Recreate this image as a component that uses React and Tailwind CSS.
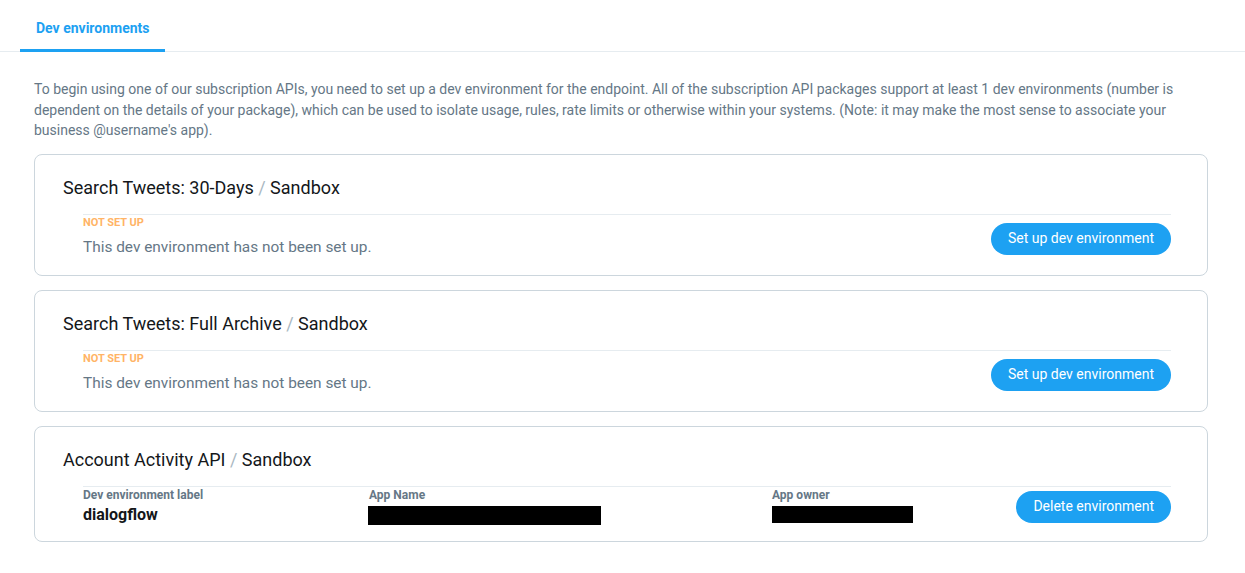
const redacted = 'bg-black';

function Title({ name }) {
  return (
    <h2 className="text-[18px] leading-[24px] text-[#14171a]">
      {name} <span className="text-[#aab8c2]">/</span> Sandbox
    </h2>
  );
}

function PillButton({ children, className = '' }) {
  return (
    <button className={`h-8 rounded-full bg-[#1da1f2] px-[17px] text-[14px] text-white ${className}`}>
      {children}
    </button>
  );
}

function NotSetUpCard({ name }) {
  return (
    <div className="rounded-lg border border-[#ccd6dd] pt-[21px] pb-[18px] pl-[28px] pr-[36px]">
      <Title name={name} />
      <div className="ml-[20px] mt-[14px] flex items-end justify-between border-t border-[#e6ecf0] pt-[1px]">
        <div>
          <p className="text-[11px] font-bold leading-[14px] text-[#ffb466]">NOT SET UP</p>
          <p className="mt-[7px] text-[15.4px] leading-[20px] text-[#657786]">
            This dev environment has not been set up.
          </p>
        </div>
        <PillButton className="mb-[2px]">Set up dev environment</PillButton>
      </div>
    </div>
  );
}

function ActivityCard() {
  return (
    <div className="rounded-lg border border-[#ccd6dd] pt-[21px] pb-[16px] pl-[28px] pr-[36px]">
      <Title name="Account Activity API" />
      <div className="ml-[20px] mt-[14px] flex items-start border-t border-[#e6ecf0] pt-[1px]">
        <div className="w-[286px]">
          <p className="text-[12px] font-bold leading-[14px] text-[#657786]">Dev environment label</p>
          <p className="mt-[3px] text-[16px] font-bold leading-[20px] text-[#14171a]">dialogflow</p>
        </div>
        <div className="w-[403px]">
          <p className="text-[12px] font-bold leading-[14px] text-[#657786]">App Name</p>
          <div className={`ml-[-1px] mt-[4px] h-[19px] w-[233px] ${redacted}`} />
        </div>
        <div className="flex-1">
          <p className="text-[12px] font-bold leading-[14px] text-[#657786]">App owner</p>
          <div className={`mt-[4px] h-[17px] w-[141px] ${redacted}`} />
        </div>
        <PillButton className="mt-[3px]">Delete environment</PillButton>
      </div>
    </div>
  );
}

export default function App() {
  return (
    <div className="min-h-[573px] bg-white font-['Roboto',sans-serif]">
      <div className="border-b border-[#e6ecf0] pl-5">
        <div className="inline-block border-b-[3px] border-[#1da1f2] px-4 pt-[19px] pb-[12px] mb-[-1px] text-[14px] font-bold leading-[18px] text-[#1da1f2]">
          Dev environments
        </div>
      </div>

      <div className="ml-[34px] mr-[37px] pt-[27px]">
        <p className="text-[14px] leading-[20.5px] text-[#657786]">
          To begin using one of our subscription APIs, you need to set up a dev environment for the endpoint. All of
          the subscription API packages support at least 1 dev environments (number is dependent on the details of
          your package), which can be used to isolate usage, rules, rate limits or otherwise within your systems.
          (Note: it may make the most sense to associate your business @username's app).
        </p>

        <div className="mt-[13px] flex flex-col gap-[14px]">
          <NotSetUpCard name="Search Tweets: 30-Days" />
          <NotSetUpCard name="Search Tweets: Full Archive" />
          <ActivityCard />
        </div>
      </div>
    </div>
  );
}
